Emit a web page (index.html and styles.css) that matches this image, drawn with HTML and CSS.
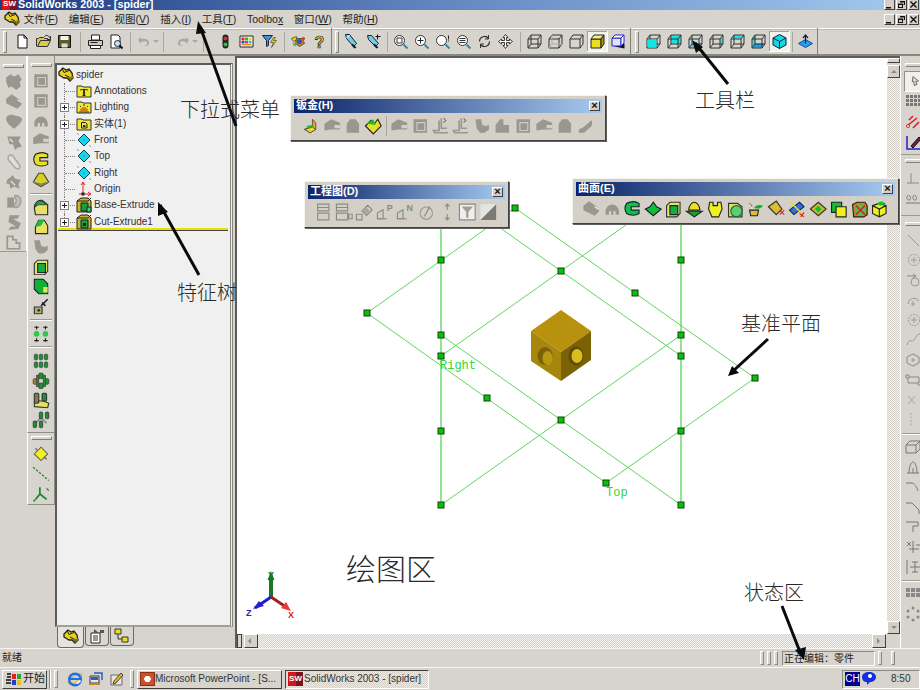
FILE: index.html
```html
<!DOCTYPE html>
<html lang="zh">
<head>
<meta charset="utf-8">
<title>SolidWorks 2003 - [spider]</title>
<link rel="stylesheet" href="styles.css">
</head>
<body>
<svg class="sprite" xmlns="http://www.w3.org/2000/svg">
<symbol id="wmin" viewBox="0 0 9 9"><path d="M1 7h5v1.500H1z" fill="#111"/></symbol>
<symbol id="wmax" viewBox="0 0 9 9"><path d="M3 1h5v4H6v3H1V3.500h2zM3 3.500V2.500h4v2H6V3.500zM2 5v2h3V5z" fill="#111" fill-rule="evenodd"/></symbol>
<symbol id="wcls" viewBox="0 0 9 9"><path d="M1.500 1.500l6 6M7.500 1.500l-6 6" stroke="#111" stroke-width="1.400"/></symbol>
<symbol id="logo" viewBox="0 0 16 16"><path d="M1 5l4-4 3 2 3-1 3 4 1 5-3 3-3-3-3 0-5-3z" fill="#e8d020" stroke="#222" stroke-width="1.300"/><path d="M4 1.500l2 4 5-2M7 8l4 2 1 3" fill="none" stroke="#222"/><path d="M11 10l4-1v2l-3 3z" fill="#8a7a10"/></symbol>
<symbol id="doc" viewBox="0 0 16 16"><path d="M3.500 1.500h6l3 3v10h-9z" fill="#fff" stroke="#111"/><path d="M9.500 1.500v3h3" fill="none" stroke="#111"/></symbol>
<symbol id="open" viewBox="0 0 16 16"><path d="M1 13V5h2l1-1h4l1 1h3v2H5l-3 6h10l3-6H5" fill="#d8c850" stroke="#333"/><path d="M9 3c2-2 4-1 5 1l1-1v3h-3" fill="none" stroke="#222"/></symbol>
<symbol id="save" viewBox="0 0 16 16"><path d="M2 2h12v12H2z" fill="#5c5c20" stroke="#111"/><path d="M4 2.500h8v4H4z" fill="#f4f4f0"/><path d="M5 10h6v4H5z" fill="#ddd"/></symbol>
<symbol id="print" viewBox="0 0 16 16"><path d="M4 1.500h8v5H4z" fill="#fff" stroke="#222"/><path d="M1 7h14v5H1z" fill="#c8c8c0" stroke="#222"/><path d="M3 12h10v3H3z" fill="#fff" stroke="#222"/><path d="M3 9h7" stroke="#222"/></symbol>
<symbol id="prev" viewBox="0 0 16 16"><path d="M2.500 1.500h7l2 2v11h-9z" fill="#fff" stroke="#222"/><circle cx="9" cy="10" r="3" fill="#bfe4f4" stroke="#223"/><path d="M11 12l3 3" stroke="#111" stroke-width="2"/></symbol>
<symbol id="undo" viewBox="0 0 16 16"><path d="M2 6l3-3v2c5-1 8 1 8 4s-3 3-5 3c2-1 3-1 3-3s-2-2-6-1v2z" fill="#a8a8a0"/></symbol>
<symbol id="redo" viewBox="0 0 16 16"><path d="M14 6l-3-3v2C6 4 3 6 3 9s3 3 5 3C6 11 5 11 5 9s2-2 6-1v2z" fill="#a8a8a0"/></symbol>
<symbol id="light" viewBox="0 0 16 16"><rect x="5" y="1" width="6" height="14" rx="3" fill="#222"/><circle cx="8" cy="5" r="2" fill="#d03030"/><circle cx="8" cy="11" r="2" fill="#30c040"/></symbol>
<symbol id="colors" viewBox="0 0 16 16"><path d="M1.500 2.500h13v11h-13z" fill="#fff" stroke="#222"/><path d="M3 4h3v3H3z" fill="#e02020"/><path d="M6.500 4h3v3h-3z" fill="#20c020"/><path d="M10 4h3v3h-3z" fill="#e0e020"/><path d="M3 7.500h3v2.500H3z" fill="#2040e0"/><path d="M6.500 7.500h3v2.500h-3z" fill="#e020c0"/><path d="M10 7.500h3v2.500h-3z" fill="#20c0e0"/><path d="M3 10.500h10V12H3z" fill="#f09020"/></symbol>
<symbol id="filter" viewBox="0 0 16 16"><path d="M1 2h10L7 7v5L5 13V7z" fill="#4a90d0" stroke="#224"/><path d="M12 4L9 9h3l-2 5 5-7h-3l2-3z" fill="#e8d020" stroke="#333" stroke-width=".6"/></symbol>
<symbol id="star" viewBox="0 0 16 16"><path d="M1 5l5-2 1 3-4 2z" fill="#e8d020" stroke="#333" stroke-width=".7"/><path d="M6 5h6l2 5-5 3-4-3z" fill="#d08020" stroke="#333" stroke-width=".7"/><circle cx="9" cy="8" r="2.500" fill="#3050d0"/><path d="M2 9l3 1 1 3-3-1z" fill="#40c040"/><circle cx="13" cy="5" r="1.500" fill="#e03030"/></symbol>
<symbol id="flash" viewBox="0 0 16 16"><path d="M3 1l4 0 7 9-3 3-7-8z" fill="#7cc8e8" stroke="#123"/><path d="M10 10l4 4-2 1-3-3z" fill="#123"/><path d="M4 4l3-2" stroke="#fff"/></symbol>
<symbol id="flashp" viewBox="0 0 16 16"><path d="M2 2l4 0 7 8-3 3-7-7z" fill="#7cc8e8" stroke="#123"/><path d="M9 10l4 4-2 1-3-3z" fill="#123"/><path d="M12 1v5M10 3h5" stroke="#111"/></symbol>
<symbol id="zfit" viewBox="0 0 16 16"><circle cx="7" cy="7" r="5" fill="#fff" stroke="#333"/><path d="M4.500 4.500h5v5h-5z" fill="none" stroke="#333"/><path d="M11 11l4 4" stroke="#38a" stroke-width="2"/></symbol>
<symbol id="zin" viewBox="0 0 16 16"><circle cx="7" cy="7" r="5" fill="#fff" stroke="#333"/><path d="M4 7h6M7 4v6" stroke="#222"/><path d="M11 11l4 4" stroke="#38a" stroke-width="2"/></symbol>
<symbol id="zq" viewBox="0 0 16 16"><circle cx="7" cy="7" r="5" fill="#fff" stroke="#333"/><path d="M11 11l4 4" stroke="#38a" stroke-width="2"/><path d="M14 2v4M14 7v1" stroke="#222"/></symbol>
<symbol id="zout" viewBox="0 0 16 16"><circle cx="7" cy="7" r="5" fill="#fff" stroke="#333"/><path d="M4 5h6M4 7h6M4 9h6" stroke="#333"/><path d="M11 11l4 4" stroke="#38a" stroke-width="2"/></symbol>
<symbol id="rot" viewBox="0 0 16 16"><path d="M3 8a5 5 0 0 1 9-3M13 8a5 5 0 0 1-9 3" fill="none" stroke="#333" stroke-width="1.300"/><path d="M12 1.500v4H8.500M4 14.500v-4h3.500" fill="none" stroke="#333"/></symbol>
<symbol id="pan" viewBox="0 0 16 16"><path d="M8 1l2.500 3H9v3h3V5.500L15 8l-3 2.500V9H9v3h1.500L8 15l-2.500-3H7V9H4v1.500L1 8l3-2.500V7h3V4H5.500z" fill="#fff" stroke="#222" stroke-width=".9"/></symbol>
<symbol id="cw" viewBox="0 0 16 16"><path d="M1.500 5.500h10v9h-10zM1.500 5.500l3-4h10v9l-3 4M11.500 5.500l3-4" fill="none" stroke="#333"/><path d="M4.500 1.500v9h10M4.500 10.500l-3 4" fill="none" stroke="#333"/></symbol>
<symbol id="ch" viewBox="0 0 16 16"><path d="M1.500 5.500h10v9h-10zM1.500 5.500l3-4h10v9l-3 4M11.500 5.500l3-4" fill="none" stroke="#333"/><path d="M4.500 1.500v9h10M4.500 10.500l-3 4" fill="none" stroke="#aaa"/></symbol>
<symbol id="cr" viewBox="0 0 16 16"><path d="M1.500 5.500h10v9h-10zM1.500 5.500l3-4h10v9l-3 4M11.500 5.500l3-4" fill="none" stroke="#333"/></symbol>
<symbol id="cy" viewBox="0 0 16 16"><path d="M1.500 5.500h10v9h-10z" fill="#e8e020" stroke="#222"/><path d="M1.500 5.500l3-4h10l-3 4z" fill="#f4f080" stroke="#222"/><path d="M11.500 5.500l3-4v9l-3 4z" fill="#a09810" stroke="#222"/></symbol>
<symbol id="cb" viewBox="0 0 16 16"><path d="M4 13l10 2 0-5z" fill="#111"/><path d="M1.500 4.500h9v8h-9z" fill="#e0e0ff" stroke="#22c"/><path d="M1.500 4.500l3-3h9l-3 3zM10.500 4.500l3-3v8l-3 3z" fill="#fff" stroke="#22c"/></symbol>
<symbol id="v1" viewBox="0 0 16 16"><use href="#cw"/><path d="M2 6h9v8H2z" fill="#10e8e8"/></symbol>
<symbol id="v2" viewBox="0 0 16 16"><path d="M5 2h9v8H5z" fill="#10e8e8"/><use href="#cw"/></symbol>
<symbol id="v3" viewBox="0 0 16 16"><path d="M2 14l3-4h9l-3 4z" fill="#1a9ce8"/><path d="M2 6h9v8H2z" fill="#a8f0f0" opacity=".5"/><use href="#cw"/></symbol>
<symbol id="v4" viewBox="0 0 16 16"><path d="M12 5l2-3v8l-2 4z" fill="#10e8e8"/><use href="#cw"/></symbol>
<symbol id="v5" viewBox="0 0 16 16"><path d="M2 5l3-3h9l-3 3z" fill="#10e8e8"/><use href="#cw"/></symbol>
<symbol id="v6" viewBox="0 0 16 16"><path d="M2 14l3-4v-9L2 5z" fill="#10e8e8"/><path d="M2 14l3-4h9l-3 4z" fill="#1a9ce8"/><use href="#cw"/></symbol>
<symbol id="v7" viewBox="0 0 16 16"><path d="M8 1l6.500 3.500v7L8 15l-6.500-3.500v-7z" fill="#10d8e8" stroke="#123"/><path d="M1.500 4.500L8 8l6.500-3.500M8 8v7" fill="none" stroke="#123"/></symbol>
<symbol id="plane" viewBox="0 0 16 16"><path d="M1 10l7-4 7 4-7 4z" fill="#28a0e8" stroke="#14a"/><path d="M8 10V2M5.500 4.500L8 1.500l2.500 3" fill="none" stroke="#123" stroke-width="1.200"/></symbol>
<symbol id="g1" viewBox="0 0 16 16"><path d="M1 4l4-3 3 2 4-2 3 5-2 2 1 4-4 3-4-3-3 1-2-5z" fill="#98988f"/></symbol>
<symbol id="g2" viewBox="0 0 16 16"><path d="M1 5l5-4 7 5 2 4-4 4-6-3-4-2z" fill="#98988f"/><path d="M11 6l3 2" stroke="#eee"/></symbol>
<symbol id="g3" viewBox="0 0 16 16"><path d="M1 5c0-3 4-4 7-3s6 1 7 3-3 6-7 9C4 11 1 8 1 5z" fill="#98988f"/></symbol>
<symbol id="g4" viewBox="0 0 16 16"><path d="M2 3h12l-2 4 3 5-4 1-2 2-2-5H4z" fill="#98988f"/><path d="M4 5l3 3" stroke="#eee"/></symbol>
<symbol id="g5" viewBox="0 0 16 16"><path d="M4 2c2-1 3 0 4 2l5 7c1 3-2 4-4 2L3 6C2 4 3 3 4 2z" fill="#e0ded8" stroke="#a6a69e" stroke-width="1.300"/></symbol>
<symbol id="g6" viewBox="0 0 16 16"><path d="M2 6l5-4 2 3 5 1-2 4 1 4-5-2-3 2-1-4-3-1z" fill="#98988f"/><path d="M5 7l4 4" stroke="#eee"/></symbol>
<symbol id="g7" viewBox="0 0 16 16"><path d="M2 4h6v9H2z" fill="#98988f"/><path d="M9 2c4 0 6 3 5 7s-4 5-6 3 2-2 2-5-3-3-1-5z" fill="#bcbcb4" stroke="#98988f"/></symbol>
<symbol id="g8" viewBox="0 0 16 16"><path d="M4 2h9l-2 3H7l7 4-2 5-9 1 2-3h5L3 8z" fill="#98988f"/></symbol>
<symbol id="g9" viewBox="0 0 16 16"><path d="M2 3h5v3h3v3h3v5H2z" fill="none" stroke="#98988f" stroke-width="1.500"/></symbol>
<symbol id="ga" viewBox="0 0 16 16"><path d="M2 2h12v12H2z" fill="#98988f"/><path d="M5 5h7v7H5z" fill="none" stroke="#ccc"/></symbol>
<symbol id="gb" viewBox="0 0 16 16"><path d="M2 13v-3c0-3 3-6 6-6s6 3 6 6v3h-3v-3H9v3H7v-3H5v3z" fill="#98988f"/></symbol>
<symbol id="gc" viewBox="0 0 16 16"><path d="M2 2h5l1 5 3 1 3-1v4l-4 3H6l-3-4z" fill="#98988f"/></symbol>
<symbol id="gd" viewBox="0 0 16 16"><path d="M2 14V7l4-5h3v5l5 0v7z" fill="#98988f"/></symbol>
<symbol id="ge" viewBox="0 0 16 16"><path d="M8 1v9h5M6 3v9H1l1 2h12" fill="none" stroke="#98988f" stroke-width="1.500"/><path d="M10 1l2 2-2 2" fill="none" stroke="#777"/></symbol>
<symbol id="gf" viewBox="0 0 16 16"><path d="M2 14c0-3 1-4 3-4l5-4c2-2 3-3 4-3v4c-1 2-3 3-4 4-2 2-3 3-4 3z" fill="#98988f"/></symbol>
<symbol id="gh" viewBox="0 0 16 16"><path d="M1 6l6-4 8 3v6H7l-6 1z" fill="#98988f"/><path d="M10 7h5v3h-5z" fill="#d4d0c8"/></symbol>
<symbol id="gi" viewBox="0 0 16 16"><path d="M3 14V6l3-4h5l3 4v8z" fill="#98988f"/></symbol>
<symbol id="y1" viewBox="0 0 16 16"><path d="M3 3c4-2 8-2 11 0v3H7v3h7v3c-3 2-8 2-11 0-2-3-2-6 0-9z" fill="#e8e020" stroke="#222"/></symbol>
<symbol id="y2" viewBox="0 0 16 16"><path d="M6 2h4l5 8-7 4-7-4z" fill="#d8d020" stroke="#444"/><path d="M1 10l7 2 7-2" fill="none" stroke="#777"/></symbol>
<symbol id="e1" viewBox="0 0 16 16"><path d="M2 9c0-4 3-7 6-7h1l5 4v9H3z" fill="#e8e060" stroke="#223"/><path d="M3 8c0-3 3-5 6-5l4 3H7c-2 0-3 1-4 2z" fill="#18c040" stroke="#223" stroke-width=".7"/></symbol>
<symbol id="e2" viewBox="0 0 16 16"><path d="M3 8l3-6h5l3 5v7H3z" fill="#e8e060" stroke="#223"/><path d="M3 8l3-6h5l-3 5z" fill="#18c040"/></symbol>
<symbol id="e3" viewBox="0 0 16 16"><path d="M2 5l3-3h9v10l-3 3H2z" fill="#e8e060" stroke="#333"/><path d="M5 5h7v8H5z" fill="#10b040" stroke="#223"/></symbol>
<symbol id="e4" viewBox="0 0 16 16"><path d="M2 2h8l4 4v9H6l-4-4z" fill="#10b030" stroke="#123"/><path d="M10 9h4v5h-4z" fill="#e8e060"/></symbol>
<symbol id="e5" viewBox="0 0 16 16"><path d="M2 9h7v6H2z" fill="#b0b070" stroke="#333"/><path d="M8 8l6-6M9 5l3 3" stroke="#222" stroke-width="1.400"/><circle cx="6" cy="12" r="1.300" fill="#333"/></symbol>
<symbol id="e6" viewBox="0 0 16 16"><circle cx="4" cy="8" r="2.500" fill="#2cc850"/><circle cx="12" cy="8" r="2.500" fill="#2cc850"/><path d="M4 1v3M12 1v3M4 12v3M12 12v3M2 2h4M10 2h4M2 14h4M10 14h4" stroke="#222"/></symbol>
<symbol id="p1" viewBox="0 0 16 16"><g fill="#1c9030" stroke="#444" stroke-width=".7"><rect x="2" y="2" width="3" height="5" rx="1"/><rect x="6.500" y="2" width="3" height="5" rx="1"/><rect x="11" y="2" width="3" height="5" rx="1"/><rect x="2" y="9" width="3" height="5" rx="1"/><rect x="6.500" y="9" width="3" height="5" rx="1"/><rect x="11" y="9" width="3" height="5" rx="1"/></g></symbol>
<symbol id="p2" viewBox="0 0 16 16"><g fill="#1c9030" stroke="#444" stroke-width=".7"><rect x="6" y="1" width="4" height="5" rx="1"/><rect x="6" y="10" width="4" height="5" rx="1"/><rect x="1" y="6" width="4" height="5" rx="1" fill="#a08030"/><rect x="11" y="6" width="4" height="5" rx="1"/><rect x="4" y="3" width="2" height="10"/><rect x="10" y="3" width="2" height="10"/></g></symbol>
<symbol id="p3" viewBox="0 0 16 16"><path d="M2 14l12 1 1-4-5-2H6l-4 1z" fill="#e8e060" stroke="#333"/><rect x="2" y="2" width="4" height="9" rx="1" fill="#808040" stroke="#333"/><rect x="9" y="2" width="4" height="7" rx="1" fill="#1c9030" stroke="#333"/></symbol>
<symbol id="p4" viewBox="0 0 16 16"><path d="M3 11l5-5 5 5" fill="none" stroke="#888" stroke-width="1.500"/><g fill="#1c9030" stroke="#333" stroke-width=".7"><rect x="1" y="9" width="3" height="6" rx="1"/><rect x="6.500" y="1" width="3" height="6" rx="1"/><rect x="12" y="1" width="3" height="6" rx="1"/><rect x="6.500" y="9" width="3" height="6" rx="1"/></g></symbol>
<symbol id="r1" viewBox="0 0 16 16"><path d="M8 2l6 6-6 6-6-6z" fill="#f4f020" stroke="#665"/><path d="M3 3l2 2M13 13l-2-2" stroke="#555"/></symbol>
<symbol id="r2" viewBox="0 0 16 16"><path d="M1 2l14 12" stroke="#2a8030" stroke-width="1.200" stroke-dasharray="2 1.500"/></symbol>
<symbol id="r3" viewBox="0 0 16 16"><path d="M7 8V2M7 8l6 5M7 8l-4 5" stroke="#108030" stroke-width="1.500" fill="none"/><circle cx="2" cy="14" r="1" fill="#280"/><path d="M13 3l2 2" stroke="#555"/></symbol>
<symbol id="tL" viewBox="0 0 16 16"><path d="M1 3h5l1 1h8v10H1z" fill="#f0e830" stroke="#333"/><path d="M4 12c0-3 2-4 4-4s4 1 4 4z" fill="#d08020"/><path d="M8 5v2M4 7l1 1M12 7l-1 1M3 13h10" stroke="#333"/></symbol>
<symbol id="tS" viewBox="0 0 16 16"><path d="M1 3h5l1 1h8v10H1z" fill="#f0e830" stroke="#333"/><path d="M5.500 6.500h4l1.500 1.500v4H5.500z" fill="#e8e060" stroke="#222"/><path d="M7 9h2.500v2H7z" fill="#333"/></symbol>
<symbol id="tP" viewBox="0 0 16 16"><path d="M8 2l6 6-6 6-6-6z" fill="#14d8e8" stroke="#046"/><path d="M1 1l2 2M15 15l-2-2" stroke="#468" stroke-dasharray="1 1"/><path d="M7 7l2 2" stroke="#28a"/></symbol>
<symbol id="tO" viewBox="0 0 16 16"><path d="M7 13V2M5 4l2-3 2 3" fill="none" stroke="#e02020"/><path d="M3 13h11M12 11l3 2-3 2" fill="none" stroke="#e02020"/><rect x="5.500" y="11.500" width="3" height="3" fill="#222"/></symbol>
<symbol id="tE" viewBox="0 0 16 16"><path d="M1 4l4-3h7l3 3v11H1z" fill="#c8b820" stroke="#222"/><path d="M1 4h11l3-3" fill="none" stroke="#222"/><path d="M5 6h7v8H5z" fill="#18a040" stroke="#123"/><path d="M11 10h4v5h-4z" fill="#48d060" stroke="#123"/></symbol>
<symbol id="tC" viewBox="0 0 16 16"><path d="M1 4l4-3h7l3 3v11H1z" fill="#c8b820" stroke="#222"/><path d="M1 4h11l3-3" fill="none" stroke="#222"/><path d="M5 6h7v8H5z" fill="#18a040" stroke="#123"/><path d="M7 9h3v3H7z" fill="#222"/></symbol>
<symbol id="tProp" viewBox="0 0 16 16"><path d="M2 5h9v10H2z" fill="#fff" stroke="#222"/><path d="M4 8h5M4 10h5M4 12h5" stroke="#333"/><path d="M5 1l5 4H5zM11 2h4v3h-4z" fill="#555"/></symbol>
<symbol id="tCfg" viewBox="0 0 16 16"><path d="M1 1h6v5H1zM8 9h6v5H8z" fill="#e8e020" stroke="#333"/><path d="M4 6v5h4" fill="none" stroke="#333"/></symbol>
<symbol id="d1" viewBox="0 0 16 16"><path d="M3 1h10v6H3zM3 4h10M3 9h10v6H3z" fill="none" stroke="#8a8a84"/></symbol>
<symbol id="d2" viewBox="0 0 16 16"><path d="M1 1h10v6H1zM1 4h10M1 9h10v6H1zM12 10h3v4h-3z" fill="none" stroke="#8a8a84"/></symbol>
<symbol id="d3" viewBox="0 0 16 16"><path d="M1 10h5v5H1zM6 7l5-5 4 4-5 5z" fill="none" stroke="#8a8a84"/><path d="M7 7l3-3 3 3-3 3z" fill="#a8a8a0"/></symbol>
<symbol id="d6" viewBox="0 0 16 16"><circle cx="8" cy="9" r="5.500" fill="none" stroke="#9a9a94"/><path d="M8 9l3-6M8 9l-2 3" stroke="#8a8a84"/></symbol>
<symbol id="d7" viewBox="0 0 16 16"><path d="M8 1v5M6 3l2-2 2 2M8 10v5M6 13l2 2 2-2" fill="none" stroke="#8a8a84"/></symbol>
<symbol id="d8" viewBox="0 0 16 16"><path d="M1 1h14v14H1z" fill="#eee" stroke="#8a8a84"/><path d="M3 3h10L9 8v5H7V8z" fill="#a0a098"/></symbol>
<symbol id="d9" viewBox="0 0 16 16"><path d="M1 1h14v14H1z" fill="#e4e4e0"/><path d="M15 1v14H1z" fill="#7a7a76"/></symbol>
<symbol id="s1" viewBox="0 0 16 16"><path d="M4 2l-1 7h2l1 6 4-2-2-4 4-1z" fill="#ddd" stroke="#333" transform="translate(1 -1)"/></symbol>
<symbol id="s2" viewBox="0 0 16 16"><path d="M1 1h3v3H1zM5 1h3v3H5zM9 1h3v3H9zM13 1h3v3h-3zM1 5h3v3H1zM5 5h3v3H5zM9 5h3v3H9zM13 5h3v3h-3zM1 9h3v3H1zM5 9h3v3H5zM9 9h3v3H9zM13 9h3v3h-3z" fill="#777"/></symbol>
<symbol id="s3" viewBox="0 0 16 16"><path d="M2 12l10-8M4 6l4-4M8 14l6-6" fill="none" stroke="#d02020" stroke-width="1.500"/><circle cx="3" cy="12" r="1.500" fill="#fff" stroke="#d02020"/></symbol>
<symbol id="s4" viewBox="0 0 16 16"><path d="M2 1v13h13" fill="none" stroke="#22c" stroke-width="1.500"/><path d="M6 11l8-9 2 2-8 9z" fill="#702050" stroke="#111"/></symbol>
<symbol id="l1" viewBox="0 0 16 16"><path d="M2 14h12M6 14V4" fill="none" stroke="#8a8a84"/></symbol>
<symbol id="l2" viewBox="0 0 16 16"><path d="M1 14h15M3 6c-2 2-1 5 1 5s2-3 0-5M9 6c-2 2-1 5 1 5s2-3 0-5" fill="none" stroke="#777"/></symbol>
<symbol id="l3" viewBox="0 0 16 16"><path d="M3 3l11 11" stroke="#9a9a94"/></symbol>
<symbol id="l4" viewBox="0 0 16 16"><circle cx="9" cy="8" r="5.500" fill="none" stroke="#9a9a94" stroke-dasharray="2 1"/><path d="M9 5v6M6 8h6" stroke="#9a9a94"/></symbol>
<symbol id="l5" viewBox="0 0 16 16"><path d="M2 4h9M8 2l3 2-3 2" fill="none" stroke="#8a8a84"/><circle cx="10" cy="10" r="4" fill="none" stroke="#9a9a94"/></symbol>
<symbol id="l6" viewBox="0 0 16 16"><path d="M3 12a6 6 0 0 1 11-3" fill="none" stroke="#9a9a94"/><path d="M8 9v5M6 12h4" stroke="#9a9a94"/></symbol>
<symbol id="l7" viewBox="0 0 16 16"><path d="M2 13c3-8 5-2 7-5s3-6 6-6" fill="none" stroke="#9a9a94"/></symbol>
<symbol id="l8" viewBox="0 0 16 16"><path d="M8 2l6 3v6l-6 3-6-3V5z" fill="none" stroke="#8a8a84"/><path d="M8 6v4M6 8h4" stroke="#9a9a94"/></symbol>
<symbol id="l9" viewBox="0 0 16 16"><path d="M3 5h11v6H3z" fill="none" stroke="#8a8a84"/><path d="M1 3h3v3H1zM13 10h3v3h-3z" fill="#d4d0c8" stroke="#8a8a84"/></symbol>
<symbol id="la" viewBox="0 0 16 16"><path d="M3 4l7 8M10 4l-7 8" stroke="#a8a8a0"/></symbol>
<symbol id="lb" viewBox="0 0 16 16"><path d="M6 1v14" stroke="#a8a8a0" stroke-dasharray="2 1.500"/></symbol>
<symbol id="lc" viewBox="0 0 16 16"><path d="M1 6h10v8H1zM1 6l4-4h10v8l-4 4M11 6l4-4" fill="none" stroke="#777"/></symbol>
<symbol id="ld" viewBox="0 0 16 16"><path d="M2 14h12M4 14c0-6 2-11 4-11s4 5 4 11M8 14V9" fill="none" stroke="#777"/></symbol>
<symbol id="le" viewBox="0 0 16 16"><path d="M1 4h6c2 0 5 4 6 8" fill="none" stroke="#777"/></symbol>
<symbol id="lf" viewBox="0 0 16 16"><path d="M1 4h6l7 7v4" fill="none" stroke="#777"/></symbol>
<symbol id="lg" viewBox="0 0 16 16"><path d="M1 3h12v4H8v6" fill="none" stroke="#777"/></symbol>
<symbol id="lh" viewBox="0 0 16 16"><path d="M2 3l4 4M6 3L2 7M8 2v12M4 10h10M11 6h4" fill="none" stroke="#777"/></symbol>
<symbol id="li" viewBox="0 0 16 16"><path d="M2 1v14M7 3h6M10 3v10M7 13h6M5 8h10" fill="none" stroke="#777"/></symbol>
<symbol id="lj" viewBox="0 0 16 16"><path d="M1 2h4v4H1zM6 2h4v4H6zM11 2h4v4h-4zM1 7h4v4H1zM6 7h4v4H6zM11 7h4v4h-4z" fill="#888"/></symbol>
<symbol id="lk" viewBox="0 0 16 16"><g fill="#888"><circle cx="8" cy="2" r="1.500"/><circle cx="3" cy="5" r="1.500"/><circle cx="13" cy="5" r="1.500"/><circle cx="3" cy="11" r="1.500"/><circle cx="13" cy="11" r="1.500"/><circle cx="8" cy="14" r="1.500"/></g></symbol>
</svg>

<div class="app">
  <header class="title">
    <span class="sw">SW</span>
    <span class="title-text">SolidWorks 2003 - [spider]</span>
    <span class="winctl"><svg class="wb"><use href="#wmin"/></svg><svg class="wb"><use href="#wmax"/></svg><svg class="wb"><use href="#wcls"/></svg></span>
  </header>
  <nav class="menu">
    <svg class="ic menu-logo"><use href="#logo"/></svg>
    <span>文件(<u>F</u>)</span><span>编辑(<u>E</u>)</span><span>视图(<u>V</u>)</span><span>插入(<u>I</u>)</span><span>工具(<u>T</u>)</span><span>Toolbo<u>x</u></span><span>窗口(<u>W</u>)</span><span>帮助(<u>H</u>)</span>
    <span class="winctl"><svg class="wb"><use href="#wmin"/></svg><svg class="wb"><use href="#wmax"/></svg><svg class="wb"><use href="#wcls"/></svg></span>
  </nav>
  <div class="toolbar">
    <i class="handle"></i><i class="sp5"></i>
    <svg class="btn"><use href="#doc"/></svg><svg class="btn"><use href="#open"/></svg><svg class="btn"><use href="#save"/></svg>
    <i class="sep s10"></i>
    <svg class="btn"><use href="#print"/></svg><svg class="btn"><use href="#prev"/></svg>
    <i class="sep s6"></i>
    <span class="drop"><svg class="ic"><use href="#undo"/></svg><i class="caret"></i></span><i class="sep s6"></i>
    <span class="drop wide"><svg class="ic"><use href="#redo"/></svg><i class="caret"></i></span><i class="sep s6"></i><i class="sp9"></i>
    <svg class="btn"><use href="#light"/></svg><svg class="btn"><use href="#colors"/></svg><svg class="btn n2"><use href="#filter"/></svg>
    <i class="sep s8"></i>
    <svg class="btn"><use href="#star"/></svg><svg class="btn" viewBox="0 0 16 16"><text x="8" y="14" text-anchor="middle" font-family="Liberation Sans" font-weight="700" font-size="16" fill="#e8d020" stroke="#222" stroke-width=".7">?</text></svg>
    <i class="end"></i><i class="handle h2"></i>
    <svg class="btn"><use href="#flash"/></svg><svg class="btn n2"><use href="#flashp"/></svg>
    <i class="sep s6"></i>
    <svg class="btn"><use href="#zfit"/></svg><svg class="btn"><use href="#zin"/></svg><svg class="btn"><use href="#zq"/></svg><svg class="btn"><use href="#zout"/></svg><svg class="btn"><use href="#rot"/></svg><svg class="btn"><use href="#pan"/></svg>
    <i class="sep s8"></i>
    <svg class="btn"><use href="#cw"/></svg><svg class="btn"><use href="#ch"/></svg><svg class="btn"><use href="#cr"/></svg><svg class="btn on"><use href="#cy"/></svg><svg class="btn"><use href="#cb"/></svg>
    <i class="end"></i><i class="handle h3"></i>
    <svg class="btn"><use href="#v1"/></svg><svg class="btn"><use href="#v2"/></svg><svg class="btn"><use href="#v3"/></svg><svg class="btn"><use href="#v4"/></svg><svg class="btn"><use href="#v5"/></svg><svg class="btn"><use href="#v6"/></svg><svg class="btn on"><use href="#v7"/></svg>
    <i class="sep s5"></i>
    <svg class="btn"><use href="#plane"/></svg>
    <i class="end"></i>
  </div>
  <main class="main">
    <div class="dock col1">
      <i class="hgrip"></i>
      <svg class="tool"><use href="#g1"/></svg><svg class="tool"><use href="#g2"/></svg><svg class="tool"><use href="#g3"/></svg><svg class="tool"><use href="#g4"/></svg><svg class="tool"><use href="#g5"/></svg><svg class="tool"><use href="#g6"/></svg><svg class="tool"><use href="#g7"/></svg><svg class="tool"><use href="#g8"/></svg><svg class="tool"><use href="#g9"/></svg>
    </div>
    <div class="col2">
      <div class="dock dock2">
        <i class="hgrip"></i>
        <svg class="tool"><use href="#ga"/></svg><svg class="tool"><use href="#ga"/></svg><svg class="tool"><use href="#gb"/></svg><svg class="tool"><use href="#gh"/></svg>
        <svg class="tool"><use href="#y1"/></svg><svg class="tool"><use href="#y2"/></svg><i class="hsep"></i>
        <svg class="tool"><use href="#e1"/></svg><svg class="tool"><use href="#e2"/></svg><svg class="tool"><use href="#gc"/></svg><svg class="tool"><use href="#e3"/></svg><svg class="tool"><use href="#e4"/></svg><svg class="tool"><use href="#e5"/></svg><i class="hsep"></i>
        <svg class="tool"><use href="#e6"/></svg><i class="hsep"></i>
        <svg class="tool"><use href="#p1"/></svg><svg class="tool"><use href="#p2"/></svg><svg class="tool"><use href="#p3"/></svg><svg class="tool"><use href="#p4"/></svg>
      </div>
      <div class="dock dock3">
        <i class="hgrip"></i>
        <svg class="tool"><use href="#r1"/></svg><svg class="tool"><use href="#r2"/></svg><svg class="tool"><use href="#r3"/></svg>
      </div>
    </div>
    <section class="pane">
      <div class="tree">
        <div class="row root"><svg class="ic"><use href="#logo"/></svg><span>spider</span></div>
        <div class="row"><i class="tw"></i><svg class="ic" viewBox="0 0 16 16"><path d="M1 3h5l1 1h8v10H1z" fill="#f0e830" stroke="#333"/><text x="8" y="13" text-anchor="middle" font-family="Liberation Serif" font-weight="700" font-size="11" fill="#111">T</text></svg><span>Annotations</span></div>
        <div class="row"><i class="tw"><i class="plus"></i></i><svg class="ic"><use href="#tL"/></svg><span>Lighting</span></div>
        <div class="row"><i class="tw"><i class="plus"></i></i><svg class="ic"><use href="#tS"/></svg><span>实体(1)</span></div>
        <div class="row"><i class="tw"></i><svg class="ic"><use href="#tP"/></svg><span>Front</span></div>
        <div class="row"><i class="tw"></i><svg class="ic"><use href="#tP"/></svg><span>Top</span></div>
        <div class="row"><i class="tw"></i><svg class="ic"><use href="#tP"/></svg><span>Right</span></div>
        <div class="row"><i class="tw"></i><svg class="ic"><use href="#tO"/></svg><span>Origin</span></div>
        <div class="row"><i class="tw"><i class="plus"></i></i><svg class="ic"><use href="#tE"/></svg><span>Base-Extrude</span></div>
        <div class="row last"><i class="tw"><i class="plus"></i></i><svg class="ic"><use href="#tC"/></svg><span>Cut-Extrude1</span></div>
        <div class="rollback"></div>
      </div>
      <div class="tabs">
        <span class="tab active"><svg class="ic"><use href="#logo"/></svg></span>
        <span class="tab"><svg class="ic"><use href="#tProp"/></svg></span>
        <span class="tab"><svg class="ic"><use href="#tCfg"/></svg></span>
      </div>
    </section>
    <section class="view">
      <div class="view-top">
        <div class="canvas">
          <svg class="scene" viewBox="237 58 650 576">
            <g class="wire">
              <path d="M441 200V505M681 200V505"/>
              <path d="M441 356L681 186M441 505L681 335M441 335L681 505M441 186L681 356"/>
              <path d="M367 313L515 208L755 378L606 483Z"/>
            </g>
            <g class="handles">
              <rect x="512" y="205" width="6" height="6"/><rect x="438" y="257" width="6" height="6"/><rect x="558" y="268" width="6" height="6"/><rect x="678" y="257" width="6" height="6"/><rect x="632" y="290" width="6" height="6"/><rect x="364" y="310" width="6" height="6"/><rect x="438" y="332" width="6" height="6"/><rect x="678" y="332" width="6" height="6"/><rect x="438" y="353" width="6" height="6"/><rect x="678" y="353" width="6" height="6"/><rect x="752" y="375" width="6" height="6"/><rect x="484" y="395" width="6" height="6"/><rect x="558" y="417" width="6" height="6"/><rect x="438" y="428" width="6" height="6"/><rect x="678" y="428" width="6" height="6"/><rect x="603" y="480" width="6" height="6"/><rect x="438" y="502" width="6" height="6"/><rect x="678" y="502" width="6" height="6"/>
            </g>
            <text class="plane-label" x="440" y="369">Right</text>
            <text class="plane-label" x="606" y="496">Top</text>
            <path d="M561 310L591 331L561 352L531 331Z" fill="#b8920e"/>
            <path d="M531 331L561 352V381L531 361Z" fill="#a6860c"/>
            <path d="M591 331L561 352V381L591 360Z" fill="#7c6206"/>
            <ellipse cx="545" cy="356" rx="7.500" ry="9" fill="#7c6206"/>
            <ellipse cx="547.500" cy="358" rx="5" ry="7" fill="#b89a10"/>
            <ellipse cx="576" cy="356" rx="7.500" ry="9.500" fill="#5e4a04"/>
            <ellipse cx="577" cy="356" rx="5.500" ry="7" fill="#dcbc18"/>
            <path d="M271 597V580" stroke="#147a28" stroke-width="4"/><path d="M271 571l3.500 9h-7z" fill="#147a28"/>
            <path d="M271 597L255 608" stroke="#2020c8" stroke-width="3"/><path d="M253 609l11-3-5-5z" fill="#2020d0"/>
            <path d="M271 597L286 607" stroke="#a02020" stroke-width="3"/><path d="M291 611l-5-9-5 6z" fill="#e83838"/>
            <text class="axis ay" x="268" y="578">Y</text><text class="axis az" x="246" y="616">Z</text><text class="axis ax" x="288" y="618">X</text>
          </svg>
        </div>
        <div class="vscroll">
          <i class="split-h"></i>
          <span class="sb up"></span>
          <span class="track"></span>
          <span class="sb down"></span>
        </div>
      </div>
      <div class="hscroll">
        <i class="split-v"></i>
        <span class="sb left"></span>
        <span class="track"></span>
        <span class="sb right"></span>
      </div>
    </section>
    <div class="rdock">
      <div class="rblock rb1">
        <i class="hgrip"></i>
        <span class="rsel"><svg class="ric"><use href="#s1"/></svg></span>
        <svg class="ric"><use href="#s2"/></svg><svg class="ric"><use href="#s3"/></svg><svg class="ric big"><use href="#s4"/></svg>
      </div>
      <div class="rblock rb2">
        <i class="hgrip"></i>
        <svg class="ric"><use href="#l1"/></svg><svg class="ric"><use href="#l2"/></svg>
      </div>
      <div class="rblock rb3">
        <i class="hgrip"></i>
        <svg class="ric"><use href="#l3"/></svg><svg class="ric"><use href="#l4"/></svg><svg class="ric"><use href="#l5"/></svg><svg class="ric"><use href="#l6"/></svg><svg class="ric"><use href="#l4"/></svg><svg class="ric"><use href="#l7"/></svg><svg class="ric"><use href="#l8"/></svg><svg class="ric"><use href="#l9"/></svg><svg class="ric"><use href="#la"/></svg><svg class="ric"><use href="#lb"/></svg>
        <i class="hsep"></i>
        <svg class="ric"><use href="#lc"/></svg><svg class="ric"><use href="#ld"/></svg><svg class="ric"><use href="#le"/></svg><svg class="ric"><use href="#lf"/></svg><svg class="ric"><use href="#lg"/></svg><svg class="ric"><use href="#lh"/></svg><svg class="ric"><use href="#li"/></svg>
        <i class="hsep"></i>
        <svg class="ric"><use href="#lj"/></svg><svg class="ric lk"><use href="#lk"/></svg>
      </div>
    </div>
  </main>
  <footer class="status">
    <span class="status-l">就绪</span>
    <i class="tick"></i><i class="tick"></i><i class="tick t3"></i>
    <span class="status-p">正在编辑：零件</span>
    <i class="tick"></i><i class="tick t2"></i>
  </footer>
  <div class="taskbar">
    <span class="start"><svg class="ic"><rect x="6" y="3" width="4" height="5" fill="#e02020"/><rect x="11" y="3" width="4" height="5" fill="#30a030"/><rect x="6" y="9" width="4" height="5" fill="#2040c0"/><rect x="11" y="9" width="4" height="5" fill="#e8c020"/><path d="M1 3h4M1 6h4M0 9h5M0 12h5" stroke="#111" stroke-width="1.500"/></svg>开始</span>
    <i class="task-sep"></i><i class="task-grip"></i>
    <svg class="ic ql" viewBox="0 0 16 16"><ellipse cx="8" cy="8" rx="8" ry="3" fill="none" stroke="#e8b020" transform="rotate(-35 8 8)"/><circle cx="8" cy="8.500" r="5.800" fill="none" stroke="#1c70e0" stroke-width="2.400"/><path d="M3 8h10" stroke="#1c70e0" stroke-width="2"/><path d="M10 12.500l3.500-3" stroke="#f4f4f0" stroke-width="2"/></svg>
    <svg class="ic ql" viewBox="0 0 16 16"><path d="M2 5h9v7H2z" fill="#e8e8e0" stroke="#334"/><path d="M3 6h7v3H3z" fill="#2860c0"/><path d="M6 2h8v7" fill="none" stroke="#2860c0" stroke-width="1.500"/><path d="M1 13h11" stroke="#d08020" stroke-width="2"/></svg>
    <svg class="ic ql" viewBox="0 0 16 16"><path d="M2 4h11v10H2z" fill="#e8e8d8" stroke="#667"/><path d="M5 10l7-8 2 2-7 8-3 1z" fill="#d8b830" stroke="#543"/></svg>
    <i class="task-grip g2"></i>
    <span class="task"><span class="ppt"></span>Microsoft PowerPoint - [S...</span>
    <span class="task pressed"><span class="sw sw-task">SW</span>SolidWorks 2003 - [spider]</span>
    <span class="tray"><span class="lang">CH</span><svg class="bubble"><path d="M1 6c0-3 3-5 7-5s7 2 7 5-3 5-6 5l-3 3v-3C3 11 1 9 1 6z" fill="#1030e0"/><circle cx="9" cy="5" r="2" fill="#fff"/></svg><span class="clock">8:50</span></span>
  </div>
</div>

<aside class="float f-sheet">
  <div class="cap"><span>钣金(H)</span><i class="close"></i></div>
  <div class="tools">
    <svg class="ft" viewBox="0 0 16 16"><path d="M2 11L9 8V2l3 3v6l-5 3z" fill="#e8a030" stroke="#333" stroke-width=".6"/><path d="M2 11l5 3 5-3-3-2z" fill="#e8e020" stroke="#333" stroke-width=".6"/><path d="M4 9l5-1" stroke="#18c030" stroke-width="2"/></svg>
    <svg class="ft"><use href="#gh"/></svg><svg class="ft"><use href="#gi"/></svg>
    <svg class="ft" viewBox="0 0 16 16"><path d="M1 8l5-5 3 3 3-4 3 6-7 7z" fill="#e8e020" stroke="#222"/><path d="M2 6l6-4 2 5z" fill="#18c030"/></svg>
    <i class="sep s6"></i>
    <svg class="ft"><use href="#gh"/></svg><svg class="ft"><use href="#ga"/></svg><svg class="ft"><use href="#ge"/></svg><svg class="ft"><use href="#ge"/></svg><svg class="ft"><use href="#gc"/></svg><svg class="ft"><use href="#gd"/></svg><svg class="ft"><use href="#ga"/></svg><svg class="ft"><use href="#gh"/></svg><svg class="ft"><use href="#gi"/></svg><svg class="ft"><use href="#gf"/></svg>
  </div>
</aside>
<aside class="float f-draw">
  <div class="cap"><span>工程图(D)</span><i class="close"></i></div>
  <div class="tools">
    <svg class="ft"><use href="#d1"/></svg><svg class="ft"><use href="#d2"/></svg><svg class="ft"><use href="#d3"/></svg>
    <svg class="ft" viewBox="0 0 16 16"><path d="M1 14V9l5-3v8z" fill="none" stroke="#8a8a84"/><path d="M1 14h8" stroke="#8a8a84"/><text x="12" y="7" text-anchor="middle" font-family="Liberation Sans" font-weight="700" font-size="8" fill="#8a8a84">P</text></svg>
    <svg class="ft" viewBox="0 0 16 16"><path d="M1 14V9l5-3v8z" fill="none" stroke="#8a8a84"/><path d="M1 14h8" stroke="#8a8a84"/><text x="12" y="7" text-anchor="middle" font-family="Liberation Sans" font-weight="700" font-size="8" fill="#8a8a84">N</text></svg>
    <svg class="ft"><use href="#d6"/></svg><svg class="ft"><use href="#d7"/></svg><svg class="ft"><use href="#d8"/></svg><svg class="ft"><use href="#d9"/></svg>
  </div>
</aside>
<aside class="float f-surf">
  <div class="cap"><span>曲面(E)</span><i class="close"></i></div>
  <div class="tools">
    <svg class="ft"><use href="#g2"/></svg><svg class="ft"><use href="#gb"/></svg><svg class="ft" viewBox="0 0 16 16"><path d="M3 3c4-2 8-2 11 0v3H7v3h7v3c-3 2-8 2-11 0-2-3-2-6 0-9z" fill="#10c040" stroke="#123"/></svg>
    <svg class="ft" viewBox="0 0 16 16"><path d="M1 8l4-2 3-4 3 4 4 2-7 6z" fill="#10c030" stroke="#123"/></svg>
    <svg class="ft"><use href="#e3"/></svg>
    <svg class="ft" viewBox="0 0 16 16"><path d="M1 10h14l-7 5z" fill="#18a030" stroke="#222"/><path d="M3 9c0-4 3-7 5-7s5 3 5 7z" fill="#e8e020" stroke="#222"/></svg>
    <svg class="ft" viewBox="0 0 16 16"><path d="M3 2h3v3h4V2h3l1 6-3 7H5L2 8z" fill="#f0f020" stroke="#222"/></svg>
    <svg class="ft" viewBox="0 0 16 16"><path d="M2 3h8l4 3v9H2z" fill="#e8e060" stroke="#333"/><circle cx="9" cy="10" r="5" fill="#58d070" stroke="#264"/></svg>
    <svg class="ft" viewBox="0 0 16 16"><path d="M2 9h8l-1 5H3z" fill="#d8c030" stroke="#222"/><path d="M6 7c2-3 5-3 8-2-2 3-5 3-8 2z" fill="#10b030"/><path d="M2 3l3 3" stroke="#d02020" stroke-dasharray="1 1"/></svg>
    <svg class="ft" viewBox="0 0 16 16"><path d="M1 6l7-5 5 7-5 5z" fill="#d8c030" stroke="#333"/><path d="M11 9l4 4M15 9l-4 4" stroke="#e02020"/></svg>
    <svg class="ft" viewBox="0 0 16 16"><path d="M1 9l9-7 4 4-9 7z" fill="#3070e0" stroke="#224"/><path d="M2 2l12 12" stroke="#e8e020" stroke-width="1.500"/><path d="M10 12l4 3M14 11l-3 4" stroke="#e02020"/></svg>
    <svg class="ft" viewBox="0 0 16 16"><path d="M1 8l7-6 7 6-7 6z" fill="#c8b830" stroke="#333"/><path d="M5 8l3-3 3 3-3 3z" fill="#10c030"/></svg>
    <svg class="ft" viewBox="0 0 16 16"><path d="M2 2h9v9H2z" fill="#10c030" stroke="#222"/><path d="M6 6h9v9H6z" fill="#f0f020" stroke="#222"/></svg>
    <svg class="ft" viewBox="0 0 16 16"><path d="M2 4l4-2h7l2 3v8l-3 2H3z" fill="#b09020" stroke="#222"/><circle cx="9" cy="9" r="4.500" fill="#50c060"/><path d="M5 5l8 8M13 5l-8 8" stroke="#e02020" stroke-width="1.300"/></svg>
    <svg class="ft" viewBox="0 0 16 16"><path d="M2 5l6-2 6 2v7l-6 3-6-3z" fill="#f0f020" stroke="#222"/><path d="M2 5l6 3 6-3M8 8v7" fill="none" stroke="#222"/><path d="M5 3l5-2 4 2-5 2z" fill="#10c030"/></svg>
  </div>
</aside>

<svg class="arrows">
  <path d="M201 29L236 126M695 43L728 84M160 205L199 275M732 372L768 339M800 652L782 606"/>
  <path class="head" d="M198 21L206 33L196 34Z"/>
  <path class="head" d="M692 40L703 47L696 53Z"/>
  <path class="head" d="M158 202L168 212L158 216Z"/>
  <path class="head" d="M728 376L732 366L739 373Z"/>
  <path class="head" d="M804 660L795 650L806 647Z"/>
</svg>
<span class="note n-menu">下拉式菜单</span>
<span class="note n-bar">工具栏</span>
<span class="note n-tree">特征树</span>
<span class="note n-plane">基准平面</span>
<span class="note n-area">绘图区</span>
<span class="note n-status">状态区</span>
</body>
</html>
```

FILE: styles.css
```css
* { box-sizing: border-box; }
html, body { margin: 0; padding: 0; }
body {
  position: relative;
  width: 920px;
  height: 690px;
  overflow: hidden;
  background: #d6d4cc;
  color: #222;
  font: 10px/1.2 "Liberation Sans", "Noto Sans CJK SC", sans-serif;
}
i { display: block; font-style: normal; }
.sprite { position: absolute; width: 0; height: 0; }
.app { display: flex; flex-direction: column; width: 920px; height: 690px; }

/* title */
.title {
  display: flex; align-items: flex-end; height: 10px; overflow: hidden; flex: none;
  padding-left: 2px;
  background: linear-gradient(90deg, #1c3a80 0%, #5f82bd 45%, #a6caf0 100%);
}
.title-text {
  margin-left: 1px; color: #fff; font-weight: 700; font-size: 10.800px; line-height: 12px; height: 12px;
}
.sw {
  display: block; width: 15px; height: 13px; flex: none; text-align: center; overflow: hidden;
  font: 700 8px/13px "Liberation Sans", sans-serif; color: #fff;
  background: linear-gradient(90deg, #d01818 55%, #7a1420 55%);
}
.winctl { display: flex; gap: 1px; margin-left: auto; padding-right: 1px; align-self: flex-end; }
.wb {
  display: block; width: 11px; height: 11px; padding: 0; background: #d4d0c8;
  border: 1px solid; border-color: #fff #404040 #404040 #fff;
}

/* menu */
.menu {
  display: flex; align-items: center; gap: 10.700px; height: 18px; flex: none; padding-left: 4px;
  font-size: 10.500px; color: #222;
}
.menu-logo { margin-right: -7px; }
.menu .winctl { padding-right: 1px; align-self: center; }

/* shared icon sizes */
.ic { display: block; width: 16px; height: 16px; flex: none; }

/* main toolbar */
.toolbar {
  display: flex; align-items: center; height: 28px; flex: none;
  border-top: 1px solid #fff; border-bottom: 2px solid #88887f; padding-left: 3px; box-shadow: inset 0 1px 0 #bbb8b0;
}
.btn { display: block; width: 21px; height: 21px; flex: none; padding: 2.500px; }
.btn.n2 { margin-left: 2px; }
.btn.on { background: #f2f1ee; box-shadow: inset -1px -1px 0 #fff, inset 1px 1px 0 #a0a098; }
.handle { width: 4px; height: 22px; flex: none; border: 1px solid; border-color: #fff #80807a #80807a #fff; }
.h2 { margin-left: 3px; margin-right: 1px; }
.h3 { margin-left: 4px; margin-right: 4px; }
.sp5 { width: 5px; flex: none; }
.sp9 { width: 9px; flex: none; }
.sep { flex: none; height: 20px; align-self: center; background: linear-gradient(#a8a8a0, #a8a8a0) center / 1px 100% no-repeat; }
.s5 { width: 5px; } .s6 { width: 6px; } .s8 { width: 8px; } .s10 { width: 10px; }
.end { width: 2px; height: 28px; flex: none; border-right: 1px solid #80807a; }
.drop { display: flex; align-items: center; width: 27px; flex: none; padding-left: 3px; }
.drop.wide { width: 34px; padding-left: 9px; }
.caret { width: 0; height: 0; margin-left: 1px; border: 3px solid transparent; border-top-color: #a8a8a0; border-bottom: 0; }

/* main area */
.main { display: flex; flex: 1; min-height: 0; }
.dock { display: flex; flex-direction: column; align-items: center; flex: none; }
.col1 { width: 27px; height: 196px; padding-top: 8px; border-bottom: 1px solid #9a9a92; border-right: 1px solid #fff; }
.col2 { width: 28px; flex: none; display: flex; flex-direction: column; }
.dock2 { height: 377px; padding-top: 7px; border-right: 1px solid #8e8e86; border-left: 1px solid #fff; border-bottom: 1px solid #8e8e86; }
.dock3 { height: 72px; padding-top: 3px; border-right: 1px solid #8e8e86; border-left: 1px solid #fff; border-bottom: 1px solid #8e8e86; }
.hgrip { width: 21px; height: 4px; flex: none; border: 1px solid; border-color: #fff #80807a #80807a #fff; margin-bottom: 4px; }
.tool { display: block; width: 20px; height: 19.800px; flex: none; padding: 1px; }
.col1 .tool { margin-left: 2px; height: 20px; }
.hsep { width: 22px; height: 2px; flex: none; margin: 3px 0 2.500px; border-top: 1px solid #9a9a92; border-bottom: 1px solid #fff; }

/* feature tree */
.pane { width: 178px; flex: none; display: flex; flex-direction: column; padding-top: 7px; }
.tree {
  flex: 1; min-height: 0; padding: 1.500px 0 0 1px;
  background: #f0f0f0; border: 2px solid #5c5c58; border-right: 3px double #8a8a84; border-bottom: 2px solid #a0a098;
}
.row { display: flex; align-items: center; height: 16.350px; font-size: 10px; color: #333; white-space: nowrap; }
.row > span { margin-left: 2px; }
.tw { position: relative; width: 18px; height: 100%; flex: none; }
.tw::before { content: ""; position: absolute; left: 6px; top: 0; bottom: 0; border-left: 1px dotted #808080; }
.tw::after { content: ""; position: absolute; left: 7px; right: 1px; top: 50%; border-top: 1px dotted #808080; }
.last .tw::before { bottom: 50%; }
.plus {
  position: absolute; left: 2px; top: 4px; width: 9px; height: 9px; z-index: 1;
  border: 1px solid #808080;
  background:
    linear-gradient(#222, #222) center / 5px 1px no-repeat,
    linear-gradient(#222, #222) center / 1px 5px no-repeat,
    #fff;
}
.rollback { width: 170px; height: 3px; margin-top: -2px; background: #e8e000; border-bottom: 1px solid #444; }
.tabs { display: flex; height: 21px; flex: none; padding-left: 2px; gap: 1px; }
.tab {
  display: flex; align-items: center; justify-content: center; width: 24px; height: 19px;
  background: #d8d6ce; border: 1px solid #6a6a64; border-top: 0; border-radius: 0 0 4px 4px;
}
.tab.active { width: 27px; height: 21px; background: #e4e2dc; }

/* graphics view */
.view { flex: 1; min-width: 0; margin-left: 2px; display: flex; flex-direction: column; border-left: 2px solid #5c5c58; border-top: 2px solid #5c5c58; }
.view-top { flex: 1; min-height: 0; display: flex; }
.canvas { flex: 1; min-width: 0; background: #fff; overflow: hidden; }
.scene { display: block; width: 100%; height: 100%; }
.wire path { fill: none; stroke: #5fd65f; stroke-width: 1; }
.wire path:first-child { stroke-width: 1.500; stroke: #6fdc6f; }
.handles rect { fill: #00c800; stroke: #1a3a1a; stroke-width: 1; }
.plane-label { font: 12px "Liberation Mono", monospace; fill: #32d632; }
.axis { font: 700 9px "Liberation Sans", sans-serif; }
.ay { fill: #147a28; } .az { fill: #2020c8; } .ax { fill: #d02020; }
.vscroll { width: 13px; flex: none; display: flex; flex-direction: column; }
.track { flex: 1; background: repeating-conic-gradient(#d4d0c8 0 25%, #f4f3f0 0 50%) 0 0 / 2px 2px; }
.sb { display: block; flex: none; width: 13px; height: 13px; position: relative; background: #d4d0c8; border: 1px solid; border-color: #fff #404040 #404040 #fff; }
.sb::after { content: ""; position: absolute; width: 0; height: 0; left: 3px; top: 3px; border: 3px solid transparent; }
.up::after { top: 1px; border-bottom-color: #8a8a84; }
.down::after { top: 4px; border-top-color: #8a8a84; }
.left::after { left: 0; border-right-color: #8a8a84; }
.right::after { left: 4px; border-left-color: #8a8a84; }
.split-h { height: 5px; flex: none; margin-bottom: 2px; border: 1px solid; border-color: #fff #404040 #404040 #fff; }
.split-v { width: 5px; flex: none; margin-right: 2px; border: 1px solid; border-color: #404040; }
.hscroll { height: 14px; flex: none; display: flex; padding-right: 14px; }
.hscroll .sb { width: 14px; height: 14px; }

/* right dock */
.rdock { width: 20px; flex: none; overflow: hidden; display: flex; flex-direction: column; border-left: 1px solid #fff; }
.rblock { display: flex; flex-direction: column; align-items: flex-start; flex: none; width: 40px; padding-left: 4px; }
.rblock .hgrip { width: 30px; }
.rb1 { height: 99px; padding-top: 7px; border-bottom: 1px solid #9a9a92; }
.rb2 { height: 61px; padding-top: 4px; border-bottom: 1px solid #9a9a92; }
.rb3 { flex: 1; padding-top: 6px; }
.rb3 .hsep { width: 30px; margin: 3px 0 2px -3px; }
.rsel { display: block; width: 30px; height: 21px; padding: 2px; background: #f0efea; border: 1px solid; border-color: #909088 #fff #fff #909088; margin: 0 0 0 -1px; }
.rsel .ric { height: 15px; }
.ric { display: block; width: 16px; height: 20px; flex: none; overflow: visible; padding: 2px 0; }
.ric.big { height: 22px; }

/* status */
.status { display: flex; align-items: center; height: 19px; flex: none; padding: 0 2px; border-top: 1px solid #f6f6f2; color: #222; font-size: 10px; }
.status-l { margin-right: auto; }
.tick { width: 4px; height: 14px; margin-right: 3px; flex: none; border: 1px solid; border-color: #fff #8a8a84 #8a8a84 #fff; }
.t3 { margin-right: 4px; }
.t2 { margin-right: 23px; margin-left: 6px; }
.status-p { width: 93px; flex: none; padding-left: 1px; margin-right: 3px; border: 1px solid; border-color: #8a8a84 #fff #fff #8a8a84; line-height: 13px; }

/* taskbar */
.taskbar { display: flex; align-items: center; height: 23px; flex: none; padding: 2px 0 2px 2px; border-top: 1px solid #f6f6f2; font-size: 10px; color: #333; }
.start {
  display: flex; align-items: center; gap: 1px; width: 45px; height: 19px; flex: none; padding-left: 3px;
  font-size: 11px; color: #222;
  border: 1px solid; border-color: #fff #404040 #404040 #fff;
}
.task-sep { width: 2px; height: 19px; margin-left: 2px; border-left: 1px solid #8a8a84; border-right: 1px solid #fff; flex: none; }
.task-grip { width: 4px; height: 18px; margin: 0 6px 0 3px; flex: none; border: 1px solid; border-color: #fff #8a8a84 #8a8a84 #fff; }
.ql { margin: 0 2.500px; }
.task-grip.g2 { margin: 0 3px 0 3px; }
.task {
  display: flex; align-items: center; width: 145px; height: 19px; flex: none; margin-right: 3px; padding-left: 2px;
  white-space: nowrap; border: 1px solid; border-color: #fff #404040 #404040 #fff;
}
.ppt { display: block; width: 15px; height: 14px; margin-right: 0; flex: none; background: radial-gradient(circle at 50% 50%, #fff 0 3px, transparent 3.500px), #c8502a; border: 1px solid #8a3010; }
.pressed { width: 144px; border-color: #404040 #fff #fff #404040; background: repeating-conic-gradient(#d4d0c8 0 25%, #ecebe6 0 50%) 0 0 / 2px 2px; }
.sw-task { height: 14px; line-height: 14px; margin-right: 1px; }
.tray { display: flex; align-items: center; width: 78px; height: 19px; margin-left: auto; padding-left: 2px; border: 1px solid; border-color: #8a8a84 #fff #fff #8a8a84; }
.lang { display: block; width: 15px; height: 14px; background: #00008e; color: #fff; font-size: 10px; line-height: 14px; text-align: center; flex: none; }
.bubble { display: block; width: 16px; height: 16px; margin-left: 1px; flex: none; }
.clock { margin-left: 14px; }

/* floating toolbars */
.float {
  position: absolute; background: #d4d0c8; padding: 3px;
  border: 1px solid; border-color: #f4f4f0 #404040 #404040 #f4f4f0;
  box-shadow: 1px 1px 0 #606060;
}
.f-sheet { left: 290px; top: 95px; width: 316px; height: 46px; }
.f-draw { left: 304px; top: 181px; width: 205px; height: 47px; }
.f-surf { left: 572px; top: 178px; width: 327px; height: 46px; }
.cap {
  display: flex; align-items: center; justify-content: space-between; height: 14px; padding: 0 2px;
  background: linear-gradient(90deg, #0a246a, #a6caf0);
  color: #fff; font-weight: 700; font-size: 11px;
}
.close { position: relative; width: 11px; height: 10px; background: #d4d0c8; border: 1px solid; border-color: #fff #404040 #404040 #fff; }
.close::after { content: "×"; position: absolute; left: 0; top: -2px; width: 9px; text-align: center; color: #111; font-size: 11px; line-height: 11px; font-weight: 700; }
.tools { display: flex; align-items: center; height: 26px; padding-left: 7px; }
.f-draw .tools { padding-left: 5px; }
.f-surf .tools { padding-left: 5px; }
.ft { display: block; width: 20.600px; height: 18px; flex: none; }

/* callouts */
.arrows { position: absolute; left: 0; top: 0; width: 920px; height: 690px; pointer-events: none; }
.arrows path { fill: none; stroke: #0a0a0a; stroke-width: 3; }
.arrows .head { fill: #0a0a0a; stroke: none; }
.note { position: absolute; color: #2a2a2a; font: 300 20px/24px "Noto Sans CJK SC", sans-serif; white-space: nowrap; }
.n-menu { left: 180px; top: 97px; }
.n-bar { left: 695px; top: 88px; }
.n-tree { left: 177px; top: 280px; }
.n-plane { left: 741px; top: 311px; }
.n-area { left: 346px; top: 549px; font-size: 30px; line-height: 36px; }
.n-status { left: 744px; top: 580px; }
```
